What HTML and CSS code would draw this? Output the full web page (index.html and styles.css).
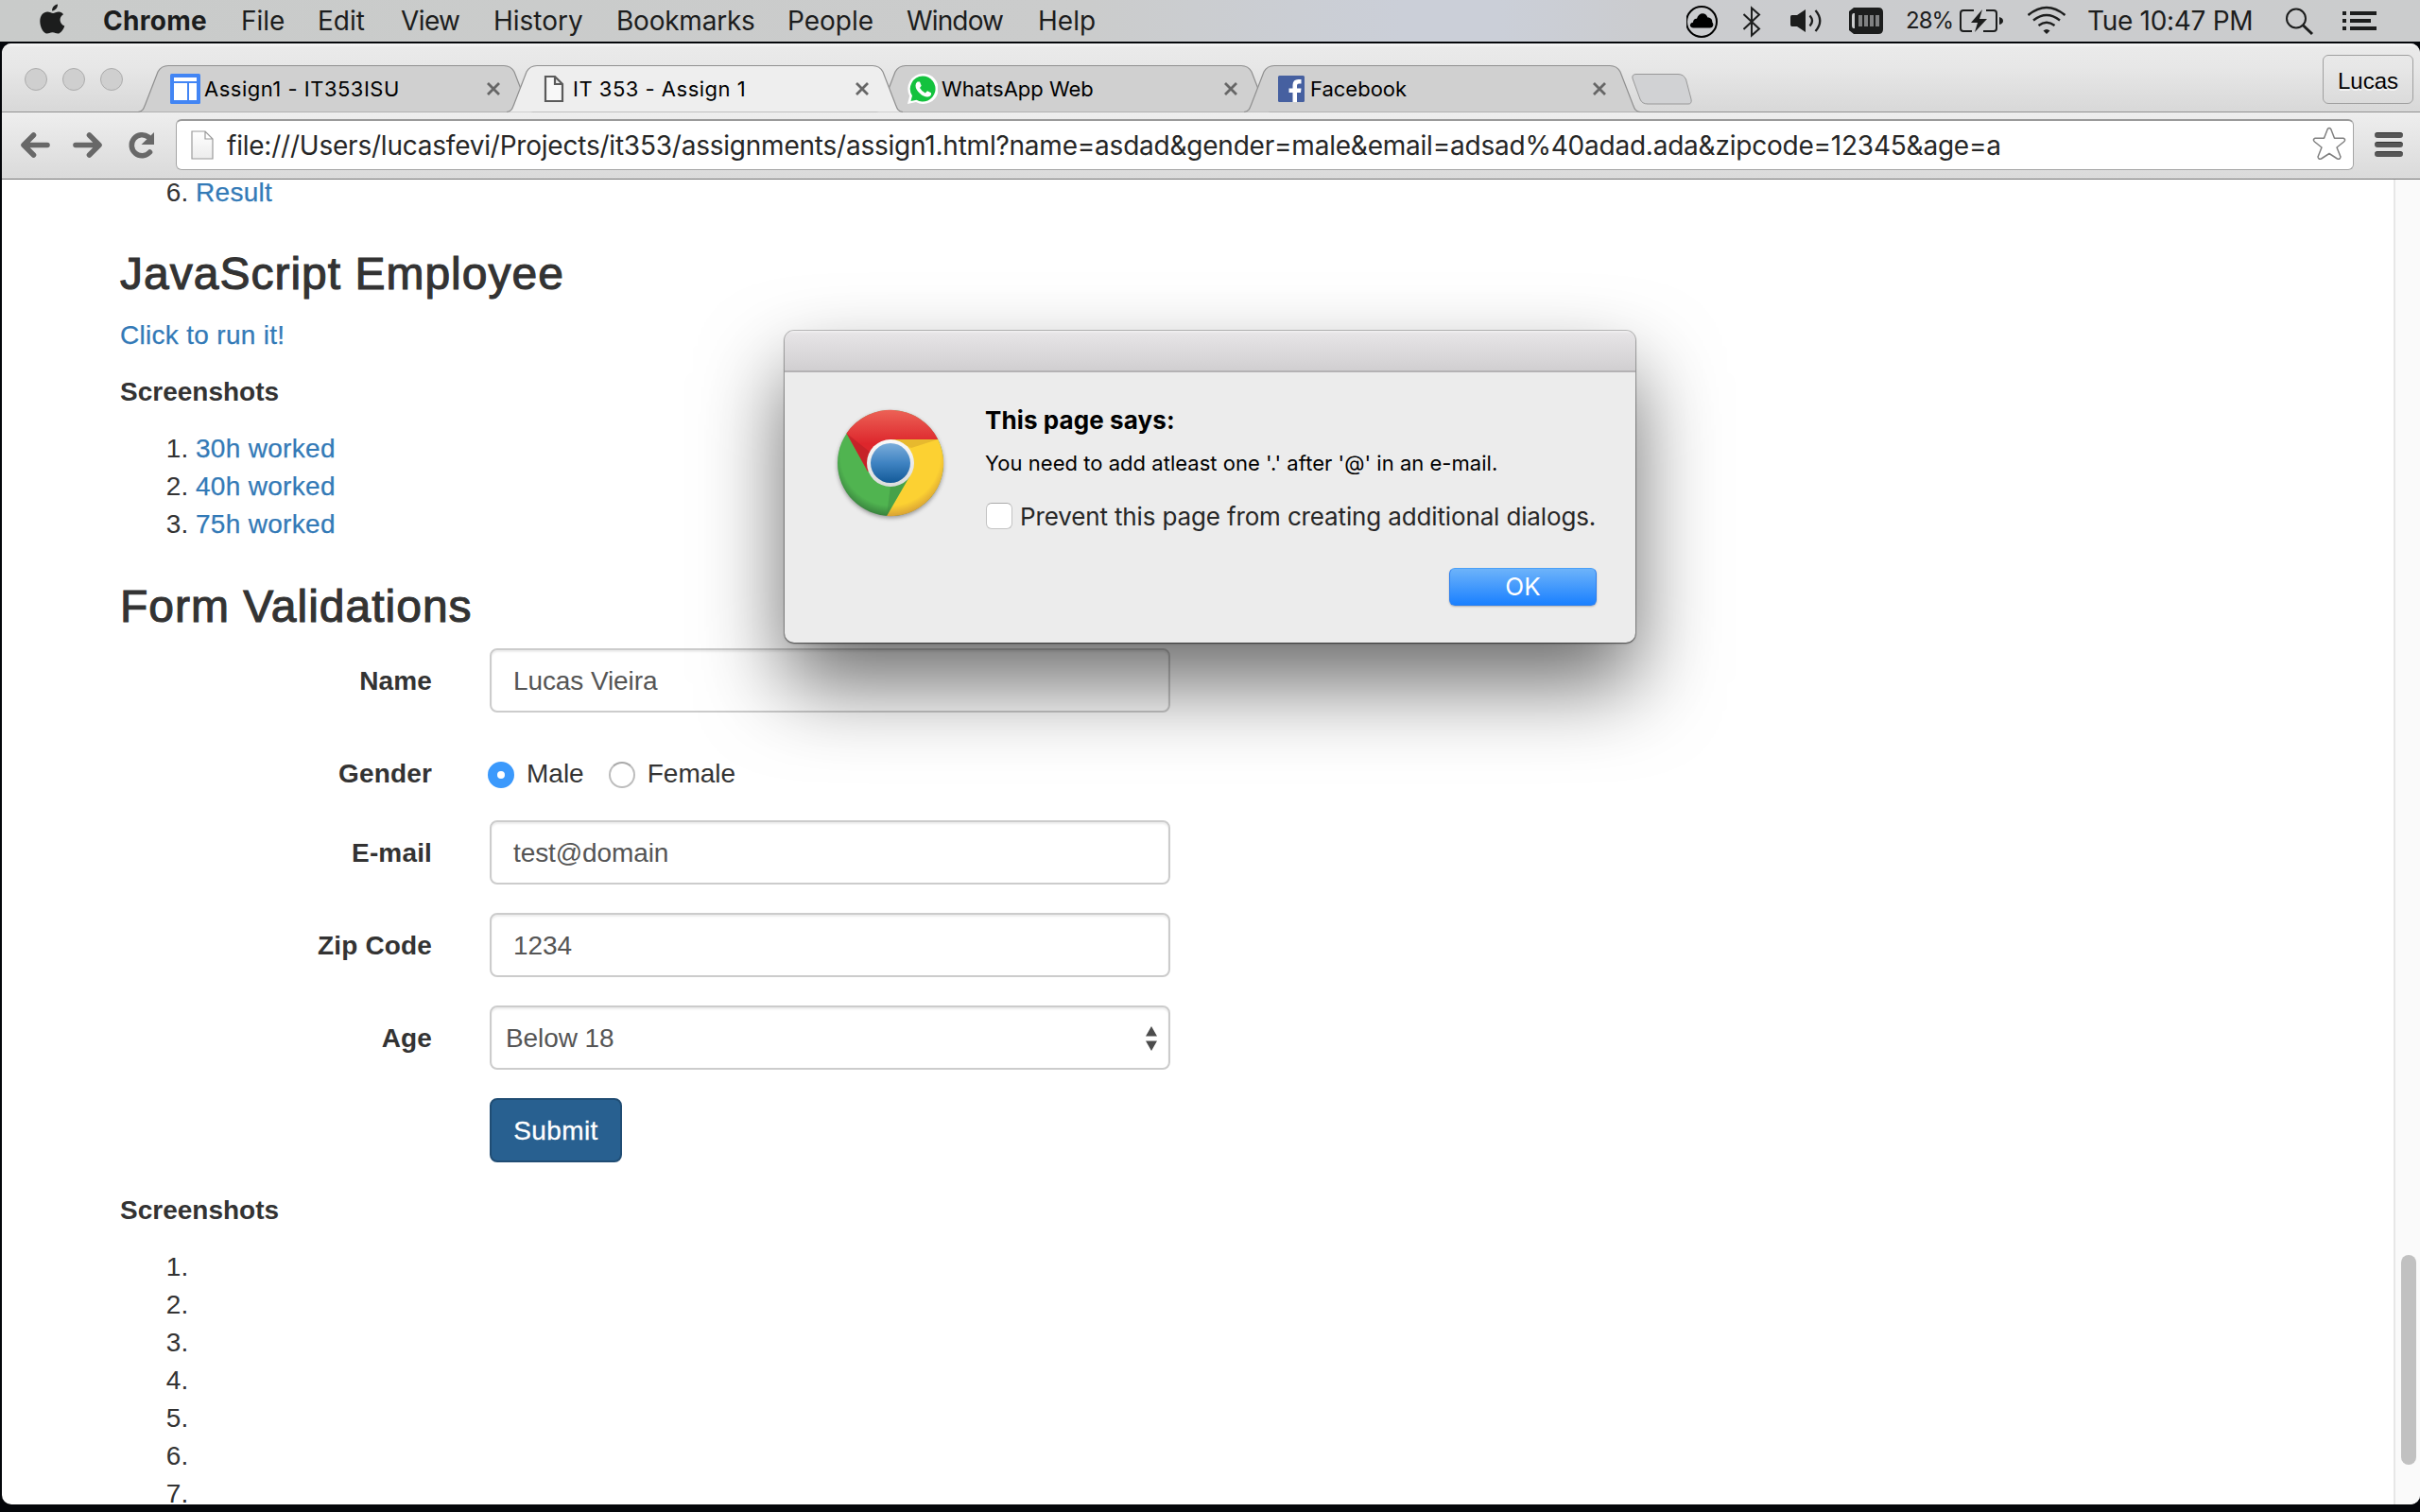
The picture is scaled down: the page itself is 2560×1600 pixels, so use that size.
FILE: index.html
```html
<!DOCTYPE html>
<html lang="en">
<head>
<meta charset="utf-8">
<title>IT 353 - Assign 1</title>
<link rel="stylesheet" href="styles.css">
</head>
<body>
<header class="menubar">
  <svg class="apple" viewBox="0 0 108 44"><path fill="#1c1d1d" d="M60.500 4.500C60.800 8 57.800 11.600 54.600 11.400C54.300 8 57.300 5 60.500 4.500ZM66.500 15.200C61.500 18.200 62 25 67.800 27.500C66.500 31.500 63.500 35.500 60.800 35.600C58.600 35.600 57.700 34.300 55 34.300C52.300 34.300 51.300 35.600 49.200 35.600C45.300 35.400 41.800 28.500 41.800 22.500C41.800 16 45.700 12.500 49.700 12.500C52.300 12.500 54 13.900 55.600 13.900C57.200 13.900 59.300 12.300 62 12.500C63.500 12.600 65.400 13.300 66.500 15.200Z"/></svg>
  <nav class="menus">
    <span class="app">Chrome</span><span>File</span><span>Edit</span><span class="view">View</span><span>History</span><span class="bookmarks">Bookmarks</span><span>People</span><span class="windowmenu">Window</span><span>Help</span>
  </nav>
  <div class="status">
    <svg width="60" height="44" viewBox="1784 0 60 44"><circle cx="1800" cy="23" r="16" fill="none" stroke="#000" stroke-width="2"/><path d="M1791.500 29.500C1786.500 29.500 1787 24 1791 23.800C1791 20.500 1793.500 19.300 1795 19.800C1796.500 13 1804.500 12 1806.500 18.500C1810 18.500 1811.500 21 1811.300 23.500C1813.500 26 1812 29.500 1809 29.500Z"/></svg>
    <svg width="50" height="44" viewBox="1844 0 50 44"><path d="M1844.500 15 1861 30.500 1853 37.500V8.500L1861 15.500 1844.500 31" fill="none" stroke="#1c1d1d" stroke-width="2"/></svg>
    <svg width="62" height="44" viewBox="1894 0 62 44"><path d="M1895.500 16H1901L1910 10V34L1901 28H1895.500Q1894 28 1894 26V18Q1894 16 1895.500 16Z" fill="#1c1d1d"/><path d="M1914.500 16.500Q1919.500 22 1914.500 27.500M1920.500 11Q1930 22 1920.500 33" fill="none" stroke="#1c1d1d" stroke-width="2.300"/></svg>
    <svg width="60" height="44" viewBox="1956 0 60 44"><path d="M1961 8H1987Q1992 8 1992 13V31Q1992 36 1987 36H1961L1956 32V12Z" fill="#1c1d1d"/><path d="M1962 14H1961Q1959 14 1959 17V27Q1959 30 1961 30H1962Z" fill="#cbcccd"/><path d="M1966 16h4v12h-4zM1972 16h4v12h-4zM1978 16h4v12h-4zM1984 16h4v12h-4z" fill="#808182"/></svg>
    <span class="percent">28%</span>
    <svg width="72" height="44" viewBox="2073 0 72 44"><path d="M2088 11H2077Q2074 11 2074 14V30Q2074 33 2077 33H2086M2101 11H2109Q2112 11 2112 14V30Q2112 33 2109 33H2098" fill="none" stroke="#1c1d1d" stroke-width="2"/><path d="M2097 10 2085 24H2092L2089 34 2102 20H2094ZM2115 18Q2119 19 2119 22Q2119 25 2115 26Z" fill="#1c1d1d"/></svg>
    <svg width="64" height="44" viewBox="2145 0 64 44"><path d="M2145.500 16Q2165 0 2184.500 16M2151 21.500Q2165 10.500 2179 21.500M2156.500 27Q2165 20.500 2173.500 27" fill="none" stroke="#1c1d1d" stroke-width="2.400"/><path d="M2161.500 32.500Q2165 29.500 2168.500 32.500L2165 36Z" fill="#1c1d1d"/></svg>
    <span class="clock">Tue 10:47 PM</span>
    <svg width="60" height="44" viewBox="2418 0 60 44"><circle cx="2429" cy="19.500" r="10" fill="none" stroke="#1c1d1d" stroke-width="2"/><path d="M2436 26.500 2446 36" stroke="#1c1d1d" stroke-width="3"/></svg>
    <svg width="36" height="44" viewBox="2478 0 36 44"><path d="M2478 12h4v4h-4zM2478 20h4v4h-4zM2478 28h4v4h-4zM2486 12h28v4h-28zM2486 20h22v4h-22zM2486 28h28v4h-28z" fill="#1c1d1d"/></svg>
  </div>
</header>

<main class="window">
  <div class="tabstrip">
    <div class="lights"><i></i><i></i><i></i></div>
    <div class="tabs">
      <div class="tab">
        <svg class="shape" viewBox="0 0 417 50"><path d="M-1 49.500C4 49 5 46 6.500 42L20 7Q23.500.5 31 .5H386Q393.500.5 397 7L410.500 42C412 46 413 49 418 49.500"/></svg>
        <svg class="favicon" viewBox="0 0 32 32"><rect width="32" height="32" rx="1.500" fill="#4285f4"/><path fill="#fff" d="M4 4h24v4H4zM4 10h14v18H4zM20 10h8v18h-8z"/></svg>
        <span class="title wide">Assign1 - IT353ISU</span>
        <svg class="close" viewBox="0 0 16 16"><path d="M2 2 14 14M14 2 2 14"/></svg>
      </div>
      <div class="tab active">
        <svg class="shape" viewBox="0 0 417 50"><path d="M-1 49.500C4 49 5 46 6.500 42L20 7Q23.500.5 31 .5H386Q393.500.5 397 7L410.500 42C412 46 413 49 418 49.500"/></svg>
        <svg class="favicon" viewBox="0 0 32 32"><path fill="#f8f8f8" stroke="#5a5a5a" stroke-width="2.200" d="M7 3H17L25 11V29H7ZM17 3V11H25"/></svg>
        <span class="title wide">IT 353 - Assign 1</span>
        <svg class="close" viewBox="0 0 16 16"><path d="M2 2 14 14M14 2 2 14"/></svg>
      </div>
      <div class="tab">
        <svg class="shape" viewBox="0 0 417 50"><path d="M-1 49.500C4 49 5 46 6.500 42L20 7Q23.500.5 31 .5H386Q393.500.5 397 7L410.500 42C412 46 413 49 418 49.500"/></svg>
        <svg class="favicon" viewBox="0 0 32 32"><path fill="#fff" d="M16 0a16 16 0 1 1-7 30L0 32 2.200 23.500A16 16 0 0 1 16 0Z"/><path fill="#14c23e" d="M16 2.500a13.500 13.500 0 1 1-6.500 25.300L3.500 29 5 23.300A13.500 13.500 0 0 1 16 2.500Z"/><path fill="#fff" d="M10.500 8.500 13 8.500 14.700 12.700 13 15Q15.300 19 18.800 20.500L21 18.300 25 20.300Q25.500 24 21.500 24.500Q17.500 25 13 20.800Q8.500 16.500 8.500 12.500Q8.500 10 10.500 8.500Z"/></svg>
        <span class="title">WhatsApp Web</span>
        <svg class="close" viewBox="0 0 16 16"><path d="M2 2 14 14M14 2 2 14"/></svg>
      </div>
      <div class="tab">
        <svg class="shape" viewBox="0 0 417 50"><path d="M-1 49.500C4 49 5 46 6.500 42L20 7Q23.500.5 31 .5H386Q393.500.5 397 7L410.500 42C412 46 413 49 418 49.500"/></svg>
        <svg class="favicon" viewBox="0 0 32 32"><rect x="2" y="2" width="28" height="28" rx="1.500" fill="#4660a0"/><path fill="#fff" d="M17.500 30V20H13.500V15.500H17.500V12Q17.500 6 23.500 6H26.500V10.500H24Q22 10.500 22 12.500V15.500H26.500L26 20H22V30Z"/></svg>
        <span class="title">Facebook</span>
        <svg class="close" viewBox="0 0 16 16"><path d="M2 2 14 14M14 2 2 14"/></svg>
      </div>
      <svg class="newtab" viewBox="0 0 64 33"><path d="M5 .5H49Q55 .5 57.500 6L63 27Q64 32 60 32H17Q11 32 9 27L1 5Q0 .5 5 .5Z" fill="#d1d2d4" stroke="#989898"/></svg>
    </div>
    <div class="profile">Lucas</div>
  </div>

  <div class="toolbar">
    <svg class="nav" width="186" height="70" viewBox="0 120 186 70"><g fill="none" stroke="#686868" stroke-width="5.600" stroke-linecap="round" stroke-linejoin="round"><path d="M50 153.500H26M35.500 143 25 153.500 35.500 164M80 153.500H104M94.500 143 105 153.500 94.500 164"/><path d="M158.500 161A11 11 0 1 1 157 145"/></g><path d="M163 140V153H149.500Z" fill="#686868"/></svg>
    <div class="omnibox">
      <svg width="24" height="32" viewBox="0 0 24 32"><defs><linearGradient id="sheet" x2="0" y2="1"><stop stop-color="#fff"/><stop offset="1" stop-color="#ececec"/></linearGradient></defs><path d="M1 1H15L23 9V30H1ZM15 1V9H23" fill="url(#sheet)" stroke="#9a9a9a" stroke-width="1.200"/></svg>
      <span class="url">file:///Users/lucasfevi/Projects/it353/assignments/assign1.html?name=asdad&amp;gender=male&amp;email=adsad%40adad.ada&amp;zipcode=12345&amp;age=a</span>
      <svg class="star" width="36" height="36" viewBox="0 0 36 36"><path d="M16.300 2.500Q18 .5 19.700 2.500L23.500 12.300H33Q36 13.500 33.500 16L26 22 30 32Q29.500 35 26.500 34L18 28.500 9.500 34Q6.500 35 6 32L10 22 2.500 16Q0 13.500 3 12.300H12.500Z" fill="#fff" stroke="#808080" stroke-width="1.500" stroke-linejoin="round"/></svg>
    </div>
    <div class="burger"><i></i><i></i><i></i></div>
  </div>

  <div class="viewport">
    <article class="page">
      <ol start="6" class="results"><li><a>Result</a></li></ol>
      <h3>JavaScript Employee</h3>
      <p><a>Click to run it!</a></p>
      <p><b>Screenshots</b></p>
      <ol class="shots"><li><a>30h worked</a></li><li><a>40h worked</a></li><li><a>75h worked</a></li></ol>
      <h3 class="forms">Form Validations</h3>
      <form>
        <label>Name</label><div class="control">Lucas Vieira</div>
        <label>Gender</label>
        <div class="radios"><i class="radio on"></i><span>Male</span><i class="radio"></i><span>Female</span></div>
        <label>E-mail</label><div class="control">test@domain</div>
        <label>Zip Code</label><div class="control">1234</div>
        <label>Age</label>
        <div class="control select">Below 18<svg width="12" height="26" viewBox="0 0 12 26"><path d="M6 0 12 10.500H0ZM6 26 12 15.500H0Z" fill="#4c4c4c"/></svg></div>
        <button type="button" class="submit">Submit</button>
      </form>
      <p><b>Screenshots</b></p>
      <ol><li></li><li></li><li></li><li></li><li></li><li></li><li></li></ol>
    </article>
    <div class="scrollbar"><div class="thumb"></div></div>
  </div>
</main>

<section class="dialog">
  <div class="titlebar"></div>
  <div class="body">
    <svg class="logo" viewBox="-60 -60 120 124">
      <defs>
        <linearGradient id="red" x2="0" y2="1"><stop stop-color="#ec6256"/><stop offset=".55" stop-color="#dd262c"/></linearGradient>
        <radialGradient id="green" gradientUnits="userSpaceOnUse" cx="0" cy="-8" r="66"><stop offset=".8" stop-color="#50b450"/><stop offset="1" stop-color="#34793a"/></radialGradient>
        <radialGradient id="yellow" gradientUnits="userSpaceOnUse" cx="0" cy="-8" r="66"><stop offset=".8" stop-color="#fcd132"/><stop offset="1" stop-color="#d39a35"/></radialGradient>
        <linearGradient id="blue" x2="0" y2="1"><stop stop-color="#7badda"/><stop offset=".5" stop-color="#3f83c2"/><stop offset="1" stop-color="#135a98"/></linearGradient>
        <linearGradient id="ring" x2="0" y2="1"><stop stop-color="#fafafa"/><stop offset="1" stop-color="#dcdcdc"/></linearGradient>
      </defs>
      <circle r="56" fill="url(#green)"/>
      <path d="M0-25H50.200A56 56 0 0 1-4 56L21 13Z" fill="url(#yellow)"/>
      <path d="M0-25H50.200A56 56 0 0 0-46.500-31.500L-24 9 0 0Z" fill="url(#red)"/>
      <path d="M-46.500-31.500-24 9-22-12Z" fill="#b81f27" opacity=".6"/>
      <path d="M0-25H50L22-16Z" fill="#d9a92c" opacity=".6"/>
      <path d="M-4 56 20 14 0 24Z" fill="#3b8a40" opacity=".45"/>
      <circle r="25" fill="url(#ring)"/><circle r="21" fill="url(#blue)"/>
    </svg>
    <div class="text">
      <div class="says">This page says:</div>
      <div class="message">You need to add atleast one '.' after '@' in an e-mail.</div>
      <div class="prevent"><i></i><span>Prevent this page from creating additional dialogs.</span></div>
      <button type="button" class="ok">OK</button>
    </div>
  </div>
</section>
</body>
</html>
```
FILE: styles.css
```css
* { box-sizing: border-box; }
body {
  margin: 0;
  width: 2560px;
  height: 1600px;
  overflow: hidden;
  position: relative;
  background: #04060a;
  font-family: Inter, "Noto Sans", sans-serif;
}
svg { display: block; }

/* System menu bar */
.menubar {
  height: 44px;
  display: flex;
  background: linear-gradient(90deg, #c9cbca, #cbcccc 45%, #cbcfd8 58%, #cbcfd8 62%, #cbcccf 68%, #cbcccd);
  color: #1c1d1d;
  font-size: 28px;
  line-height: 44px;
  white-space: nowrap;
}
.apple { width: 109px; height: 44px; }
.menus { display: grid; grid-template-columns: 146px 81px 88px 98px 130px 181px 126px 139px 578px; }
.app { font-weight: 700; letter-spacing: .28px; }
.view { letter-spacing: -.6px; }
.bookmarks { letter-spacing: -.23px; }
.windowmenu { letter-spacing: -.85px; }
.status { display: grid; grid-template-columns: 60px 50px 62px 60px 57px 72px 63px 210px 60px 36px; margin-left: auto; padding-right: 46px; }
.percent { font-size: 24px; line-height: 43px; letter-spacing: -1px; }
.clock { letter-spacing: -.3px; }

/* Browser window */
.window {
  margin: 2px 0 0 2px;
  height: 1546px;
  border-radius: 10px;
  overflow: hidden;
  background: #fff;
  display: flex;
  flex-direction: column;
}
.tabstrip {
  height: 73px;
  flex: none;
  display: flex;
  border-bottom: 1px solid #929292;
  background: linear-gradient(#f8f8f8, #eaeaea 4px, #e7e7e7 25px, #d8d8d8);
}
.lights { display: flex; gap: 16px; padding: 26px 0 0 24px; width: 145px; }
.lights i { width: 24px; height: 24px; border-radius: 50%; background: #cfcfcf; border: 1px solid #acacac; }
.tabs { display: flex; padding-top: 23px; }
.tab {
  position: relative;
  width: 417px;
  height: 50px;
  margin-right: -27px;
  padding: 9px 0 0 33px;
  display: grid;
  grid-template-columns: 36px 298px 16px;
  align-items: start;
}
.shape { position: absolute; inset: 0; width: 417px; height: 50px; overflow: visible; }
.shape path { fill: #d0d0d0; stroke: #8f8f8f; stroke-width: 1.2; }
.tab.active { z-index: 1; }
.active .shape path { fill: #eeeeee; }
.favicon, .title, .close { position: relative; }
.favicon { width: 32px; height: 32px; }
.title { font-size: 22px; line-height: 32px; color: #000; white-space: nowrap; }
.wide { letter-spacing: .5px; }
.close { width: 16px; height: 16px; margin-top: 8px; }
.close path { stroke: #666; stroke-width: 2.8; }
.newtab { width: 64px; height: 33px; margin: 9px 0 0 19px; }
.profile {
  width: 96px;
  height: 52px;
  margin: 12px 7px 0 auto;
  border: 1px solid #a0a0a0;
  border-radius: 6px;
  font: 24px/54px "Liberation Sans", sans-serif;
  text-align: center;
  color: #000;
  text-shadow: 0 2px 0 #f4f4f4;
}
.toolbar {
  height: 71px;
  flex: none;
  display: flex;
  background: linear-gradient(#eeeeee, #dadada);
  border-bottom: 1px solid #747474;
}
.nav { flex: none; margin: 1px 0 0 -2px; }
.omnibox {
  width: 2304px;
  height: 54px;
  margin-top: 7px;
  padding: 0 7px 0 15px;
  display: flex;
  align-items: center;
  border: 1px solid #a5a5a5;
  border-top: 2px solid #9a9a9a;
  border-radius: 6px;
  background: #fff;
}
.url { margin-left: 14px; font-size: 28px; line-height: 50px; letter-spacing: -.22px; color: #262626; white-space: nowrap; }
.star { margin-left: auto; margin-top: -3px; }
.burger { display: grid; gap: 4px; align-content: start; padding: 21px 0 0 22px; }
.burger i { width: 30px; height: 6px; border-radius: 3px; background: #575757; border-top: 1px solid #333; }

/* Page content */
.viewport { flex: 1; display: flex; min-height: 0; }
.page {
  flex: 1;
  padding-left: 125px;
  overflow: hidden;
  color: #333;
  font: 28px/40px "Liberation Sans", sans-serif;
}
.page a { color: #337ab7; letter-spacing: .3px; -webkit-text-stroke: .25px #337ab7; }
.page p { margin: 0 0 20px; }
.page ol { margin: 0; padding-left: 80px; }
.page .results { line-height: 27px; }
.page h3 {
  margin: 47px 0 18.5px;
  font-size: 48px;
  font-weight: 400;
  line-height: 52.8px;
  letter-spacing: 1px;
  -webkit-text-stroke: 1.1px #333;
}
.page .forms { margin: 41px 0 17.4px; }
form {
  display: grid;
  grid-template-columns: 330px 720px;
  grid-template-rows: 68px 54px 68px 68px 68px 68px;
  column-gap: 61px;
  row-gap: 30px;
  margin-bottom: 31px;
}
label { padding-top: 15px; text-align: right; font-weight: 700; letter-spacing: .15px; }
.control {
  padding: 13px 23px 11px;
  border: 2px solid #ccc;
  border-radius: 8px;
  background: #fff;
  color: #555;
  letter-spacing: -.1px;
  box-shadow: inset 0 2px 2px rgba(0, 0, 0, .075);
}
.select { display: flex; justify-content: space-between; align-items: center; padding: 1px 12px 0 15px; }
.radios { display: flex; align-items: center; padding-top: 15px; height: 54px; margin-left: -2px; }
.radio { width: 28px; height: 28px; margin-top: 3px; border-radius: 50%; border: 2px solid #bdbdbd; border-top-color: #aaa; background: #fff; }
.radio + span { margin-left: 13px; }
span + .radio { margin-left: 26px; }
.radio.on { border: 10px solid #3b99fc; }
.submit {
  grid-column: 2;
  width: 140px;
  padding: 1px 0 0;
  border: 2px solid #204d74;
  border-radius: 8px;
  background: #286090;
  color: #fff;
  font: 28px/40px "Liberation Sans", sans-serif;
  letter-spacing: .4px;
  -webkit-text-stroke: .3px #fff;
}
.scrollbar { width: 28px; border-left: 2px solid #e7e7e7; background: #fafafa; padding: 1138px 0 0 6px; }
.thumb { width: 16px; height: 222px; border-radius: 8px; background: #c1c1c1; }

/* Alert floating over the window */
.dialog {
  position: absolute;
  left: 830px;
  top: 350px;
  width: 900px;
  height: 330px;
  border-radius: 10px;
  overflow: hidden;
  background: #ececec;
  box-shadow: 0 0 0 1px rgba(0, 0, 0, .22), 0 1px 2px rgba(0, 0, 0, .5), 0 44px 88px rgba(0, 0, 0, .58);
}
.titlebar { height: 44px; background: linear-gradient(#f2f1f2, #e6e4e6 3px, #d1cfd1); border-bottom: 2px solid #b4b2b4; }
.body { display: flex; padding-left: 52px; }
.logo { width: 120px; height: 124px; margin-top: 36px; filter: drop-shadow(0 2px 2px rgba(0, 0, 0, .35)); }
.text { display: flex; flex-direction: column; margin-left: 40px; width: 647px; color: #000; white-space: nowrap; }
.says { margin-top: 35px; font-size: 26px; font-weight: 700; line-height: 32px; letter-spacing: .1px; }
.message { margin-top: 13px; font-size: 22px; line-height: 32px; letter-spacing: .03px; }
.prevent { display: flex; align-items: center; margin-top: 24px; height: 32px; font-size: 26px; color: #262626; letter-spacing: -.14px; }
.prevent i { width: 28px; height: 28px; margin: 0 8px 0 1px; border: 1px solid #c3c3c3; border-top-color: #aaa; border-radius: 6px; background: #fff; }
.ok {
  align-self: flex-end;
  width: 156px;
  height: 40px;
  margin-top: 39px;
  padding: 0;
  border: 1px solid #2d7fee;
  border-top-color: #4ba0f8;
  border-radius: 6px;
  background: linear-gradient(#6db3fa, #1a80ff);
  box-shadow: 0 1px 2px rgba(0, 0, 0, .25);
  color: #fff;
  font: 26px/38px Inter, sans-serif;
}
```
